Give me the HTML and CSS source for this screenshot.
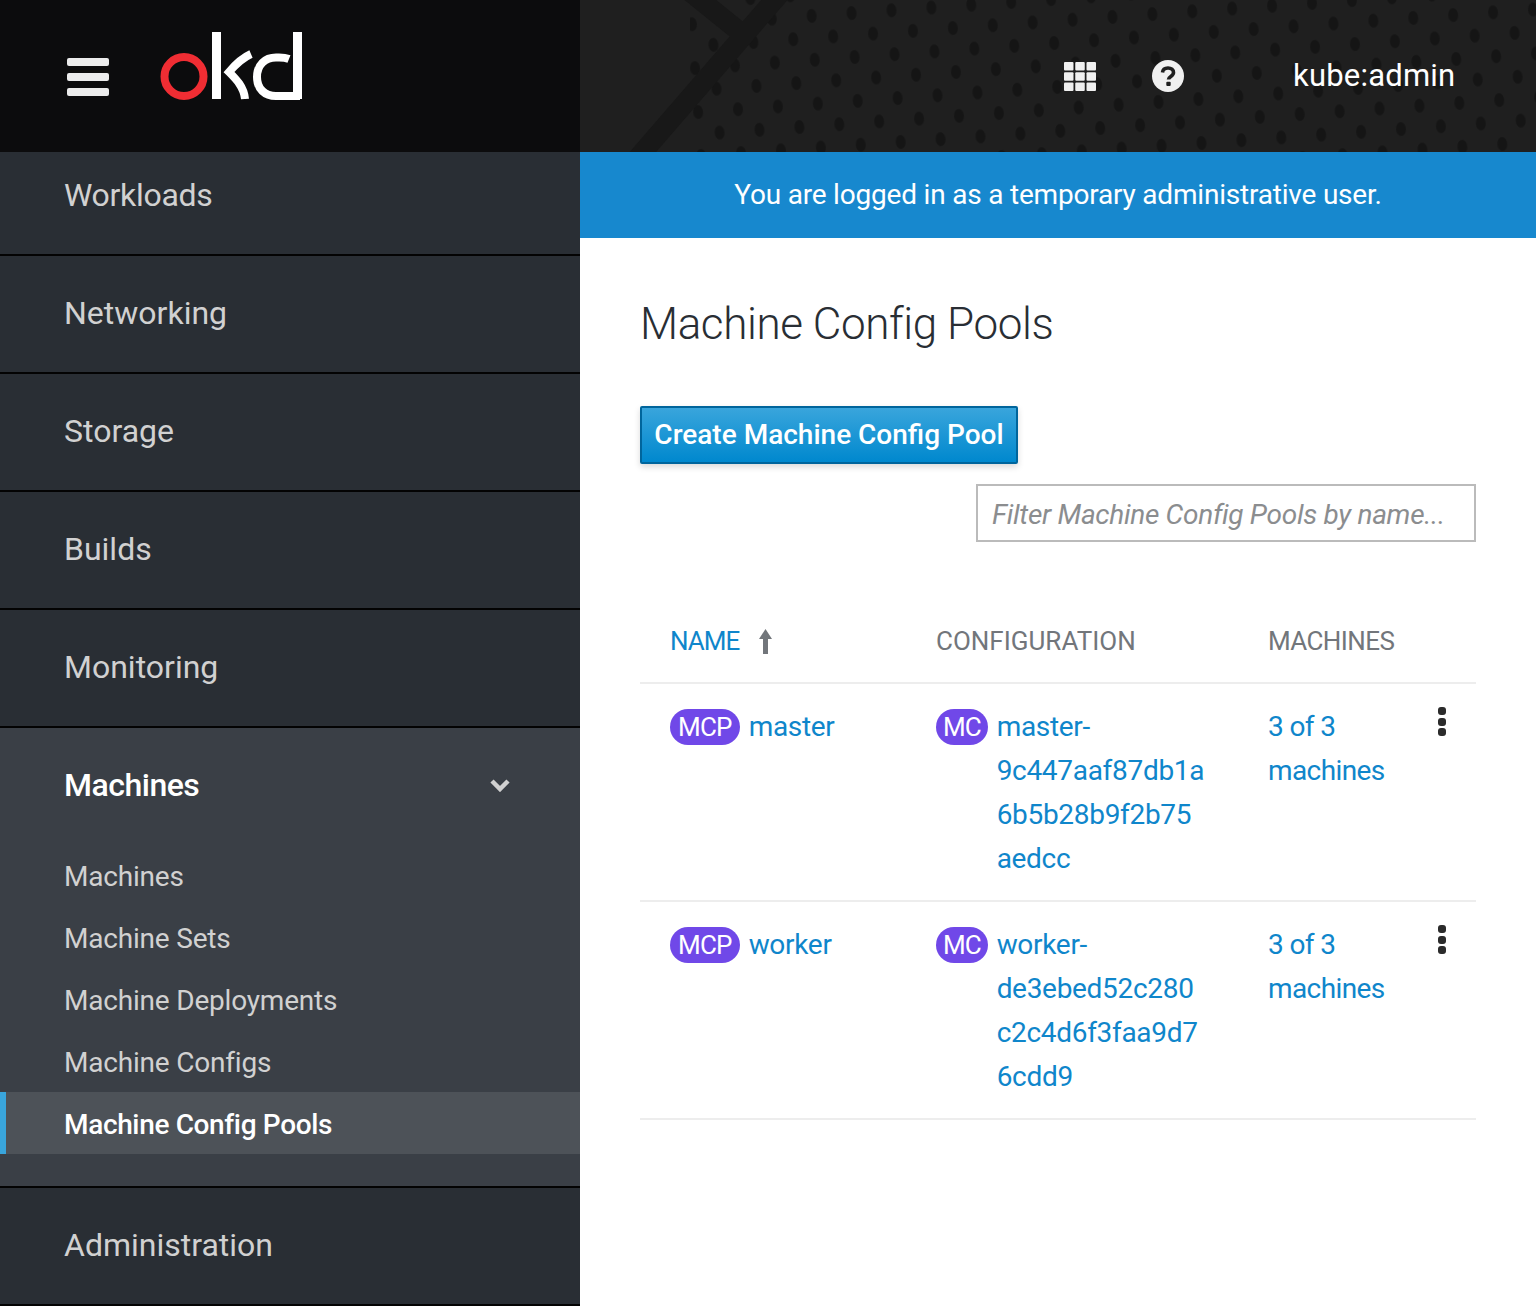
FILE: index.html
```html
<!DOCTYPE html>
<html lang="en">
<head>
    <meta charset="UTF-8">
    <meta name="viewport" content="width=device-width, initial-scale=1.0">
    <title>Machine Config Pools</title>
    <link rel="stylesheet" href="styles.css">
</head>
<body>
    <div class="page">
        <header class="masthead">
            <!-- background texture, sits behind the header content -->
            <svg class="masthead-texture" width="956" height="152" viewBox="0 0 956 152">
                <defs>
                    <pattern id="dots" width="40" height="44" patternUnits="userSpaceOnUse" patternTransform="rotate(-4)">
                        <ellipse cx="10" cy="10" rx="5" ry="7" fill="#151515"></ellipse>
                        <ellipse cx="30" cy="32" rx="5" ry="7" fill="#151515"></ellipse>
                    </pattern>
                </defs>
                <rect x="110" width="846" height="152" fill="url(#dots)"></rect>
                <path d="M203 -10L56 160M108 -10L160 32" stroke="#181818" stroke-width="20" fill="none"></path>
            </svg>
            <div class="brand">
                <button class="hamburger" type="button" aria-label="Toggle navigation">
                    <span></span><span></span><span></span>
                </button>
                <svg class="logo" width="146" height="72" viewBox="0 0 146 72">
                    <circle cx="24" cy="46.500" r="19.500" fill="none" stroke="#f02d33" stroke-width="8"></circle>
                    <path d="M56.500 2V69" stroke="#fff" stroke-width="9" fill="none"></path>
                    <path d="M91 24C82 28 75 35 69 42C76 49 84 57 85 69" stroke="#fff" stroke-width="8" fill="none"></path>
                    <path d="M129 29C124 27 120 27.500 116 27.500C105 27.500 97 35 97 47C97 59 105 66 116 66H140" stroke="#fff" stroke-width="8" fill="none"></path>
                    <path d="M137.500 2V69" stroke="#fff" stroke-width="9" fill="none"></path>
                </svg>
            </div>
            <div class="toolbar">
                <svg class="toolbar-grid" width="32" height="29" viewBox="0 0 32 29">
                    <g fill="#f0f0f0">
                        <rect width="9.500" height="8.500" rx="1"></rect><rect x="11.250" width="9.500" height="8.500" rx="1"></rect><rect x="22.500" width="9.500" height="8.500" rx="1"></rect>
                        <rect y="10.250" width="9.500" height="8.500" rx="1"></rect><rect x="11.250" y="10.250" width="9.500" height="8.500" rx="1"></rect><rect x="22.500" y="10.250" width="9.500" height="8.500" rx="1"></rect>
                        <rect y="20.500" width="9.500" height="8.500" rx="1"></rect><rect x="11.250" y="20.500" width="9.500" height="8.500" rx="1"></rect><rect x="22.500" y="20.500" width="9.500" height="8.500" rx="1"></rect>
                    </g>
                </svg>
                <svg class="toolbar-help" width="32" height="32" viewBox="0 0 32 32">
                    <circle cx="16" cy="16" r="16" fill="#f0f0f0"></circle>
                    <path d="M10.500 12.500C10.800 9.500 13 8 16 8C19.200 8 21.500 9.800 21.500 12.600C21.500 16.500 16.500 16.300 16.500 19.500" fill="none" stroke="#1f1f1f" stroke-width="3.600"></path>
                    <rect x="14.300" y="21.800" width="4.400" height="4.200" rx="1" fill="#1f1f1f"></rect>
                </svg>
                <span class="username">kube:admin</span>
            </div>
        </header>

        <nav class="sidebar">
            <div class="nav-item nav-item-first"><span>Workloads</span></div>
            <div class="nav-item"><span>Networking</span></div>
            <div class="nav-item"><span>Storage</span></div>
            <div class="nav-item"><span>Builds</span></div>
            <div class="nav-item"><span>Monitoring</span></div>
            <div class="nav-section">
                <div class="nav-section-title">
                    <span>Machines</span>
                    <svg width="20" height="14" viewBox="0 0 20 14"><path d="M2 3L10 11L18 3" fill="none" stroke="#d1d1d1" stroke-width="4.500"></path></svg>
                </div>
                <ul class="subnav">
                    <li>Machines</li>
                    <li>Machine Sets</li>
                    <li>Machine Deployments</li>
                    <li>Machine Configs</li>
                    <li class="active">Machine Config Pools</li>
                </ul>
            </div>
            <div class="nav-item"><span>Administration</span></div>
        </nav>

        <main class="content">
            <div class="banner">You are logged in as a temporary administrative user.</div>
            <div class="body">
                <h1>Machine Config Pools</h1>
                <button class="btn-primary" type="button">Create Machine Config Pool</button>
                <div class="filter-row">
                    <input class="filter" type="text" placeholder="Filter Machine Config Pools by name...">
                </div>

                <div class="table">
                    <div class="row row-head">
                        <div class="sorted">NAME
                            <svg width="13" height="25" viewBox="0 0 13 25"><path d="M6.500 0L13 10H9V25H4V10H0Z" fill="#72767b"></path></svg>
                        </div>
                        <div>CONFIGURATION</div>
                        <div class="machines-head">MACHINES</div>
                    </div>
                    <div class="row">
                        <div class="resource"><span class="badge">MCP</span><a href="#">master</a></div>
                        <div class="resource"><span class="badge badge-mc">MC</span><a href="#">master-<br>9c447aaf87db1a<br>6b5b28b9f2b75<br>aedcc</a></div>
                        <div><a class="machines-link" href="#">3 of 3<br>machines</a></div>
                        <div class="kebab"><span></span><span></span><span></span></div>
                    </div>
                    <div class="row">
                        <div class="resource"><span class="badge">MCP</span><a href="#">worker</a></div>
                        <div class="resource"><span class="badge badge-mc">MC</span><a href="#">worker-<br>de3ebed52c280<br>c2c4d6f3faa9d7<br>6cdd9</a></div>
                        <div><a class="machines-link" href="#">3 of 3<br>machines</a></div>
                        <div class="kebab"><span></span><span></span><span></span></div>
                    </div>
                </div>
            </div>
        </main>
    </div>
</body>
</html>
```

FILE: styles.css
```css
body {
    font-family: Roboto, "Noto Sans", Arial, sans-serif;
    background-color: #ffffff;
    margin: 0;
    padding: 0;
}
a {
    color: #0f86cb;
    text-decoration: none;
    letter-spacing: -0.3px;
}
.page {
    display: grid;
    grid-template-columns: 580px 956px;
    grid-template-rows: 152px 1154px;
    height: 1306px;
    overflow: hidden;
}

/* header */
.masthead {
    grid-column: 1 / 3;
    display: flex;
    position: relative;
    background-color: #1f1f1f;
}
.masthead-texture {
    position: absolute;
    left: 580px;
    top: 0;
}
.brand {
    width: 580px;
    box-sizing: border-box;
    padding: 30px 0 0 67px;
    display: flex;
    align-items: flex-start;
    background-color: #0c0c0d;
}
.hamburger {
    width: 42px;
    height: 38px;
    margin-top: 28px;
    padding: 0;
    border: none;
    background: none;
    display: flex;
    flex-direction: column;
    justify-content: space-between;
}
.hamburger span {
    display: block;
    width: 42px;
    height: 8px;
    border-radius: 2px;
    background-color: #ececec;
}
.logo {
    margin-left: 51px;
}
.toolbar {
    flex: 1;
    display: flex;
    align-items: center;
    position: relative;
    padding-left: 484px;
}
.toolbar-help {
    margin-left: 56px;
}
.username {
    margin-left: 109px;
    padding-bottom: 2px;
    color: #fff;
    font-size: 31px;
    letter-spacing: 0.2px;
}

/* left nav */
.sidebar {
    background-color: #292e34;
    color: #d1d1d1;
    font-size: 32px;
}
.nav-item {
    height: 118px;
    box-sizing: border-box;
    border-bottom: 2px solid #030303;
    display: flex;
    align-items: center;
    padding: 0 0 2px 64px;
}
.nav-item-first {
    height: 104px;
    padding-bottom: 17px;
    letter-spacing: -0.3px;
}
.nav-section {
    background-color: #3a3f46;
    border-bottom: 2px solid #030303;
    padding-bottom: 32px;
}
.nav-section-title {
    height: 116px;
    box-sizing: border-box;
    display: flex;
    align-items: center;
    justify-content: space-between;
    padding: 0 70px 2px 64px;
    color: #fff;
    font-weight: 500;
    letter-spacing: -0.5px;
}
.subnav {
    list-style: none;
    margin: 0;
    padding: 0;
    font-size: 28px;
    letter-spacing: -0.2px;
}
.subnav li {
    height: 62px;
    line-height: 66px;
    padding-left: 64px;
}
.subnav li.active {
    padding-left: 58px;
    border-left: 6px solid #39a5dc;
    background-color: #4d5258;
    color: #fff;
    font-weight: 500;
    letter-spacing: -0.35px;
}

/* main column */
.banner {
    height: 86px;
    line-height: 86px;
    text-align: center;
    color: #fff;
    font-size: 28px;
    letter-spacing: -0.2px;
    background-color: #1788ce;
}
.body {
    padding: 0 60px;
}
h1 {
    margin: 0;
    padding-top: 59px;
    font-size: 44px;
    line-height: 54px;
    font-weight: 300;
    letter-spacing: -0.4px;
    color: #292e34;
}
.btn-primary {
    display: block;
    margin-top: 55px;
    width: 378px;
    height: 58px;
    padding: 0 0 2px;
    border: 2px solid #00659c;
    border-radius: 2px;
    background: linear-gradient(#39a5dc, #0088ce);
    box-shadow: 0 3px 6px rgba(0, 0, 0, 0.15);
    color: #fff;
    font-family: inherit;
    font-size: 28px;
    font-weight: 500;
}
.filter-row {
    display: flex;
    justify-content: flex-end;
    margin-top: 20px;
}
.filter {
    width: 500px;
    height: 58px;
    padding: 2px 14px 0;
    border: 2px solid #bbbbbb;
    box-sizing: border-box;
    font-family: inherit;
    font-size: 28px;
    font-style: italic;
    letter-spacing: -0.3px;
}
.filter::placeholder {
    color: #8b8d8f;
}

/* table */
.table {
    margin-top: 64px;
    font-size: 28px;
}
.row {
    display: grid;
    grid-template-columns: 296px 332px 170px 38px;
    height: 218px;
    padding-top: 21px;
    box-sizing: border-box;
    line-height: 44px;
    border-bottom: 2px solid #ededed;
}
.row > div:first-child {
    padding-left: 30px;
}
.row-head {
    height: 78px;
    padding-top: 13px;
    font-size: 26px;
    color: #72767b;
}
.sorted {
    color: #0f86cb;
    height: 44px;
    display: flex;
    align-items: center;
    gap: 20px;
    letter-spacing: -1px;
}
.machines-head {
    letter-spacing: -0.6px;
}
.machines-link {
    letter-spacing: -0.6px;
}
.resource {
    display: flex;
    align-items: flex-start;
    gap: 9px;
}
.badge {
    flex: none;
    height: 36px;
    line-height: 37px;
    margin-top: 4px;
    padding: 0 8px;
    border-radius: 18px;
    background-color: #7048e8;
    color: #fff;
    font-size: 26px;
    letter-spacing: -0.8px;
}
.badge-mc {
    padding: 0 7px;
    letter-spacing: -1px;
}
.kebab {
    display: flex;
    flex-direction: column;
    gap: 2.500px;
    padding-top: 2px;
}
.kebab span {
    width: 8px;
    height: 8px;
    border-radius: 3px;
    background-color: #2b2b2b;
}
```
